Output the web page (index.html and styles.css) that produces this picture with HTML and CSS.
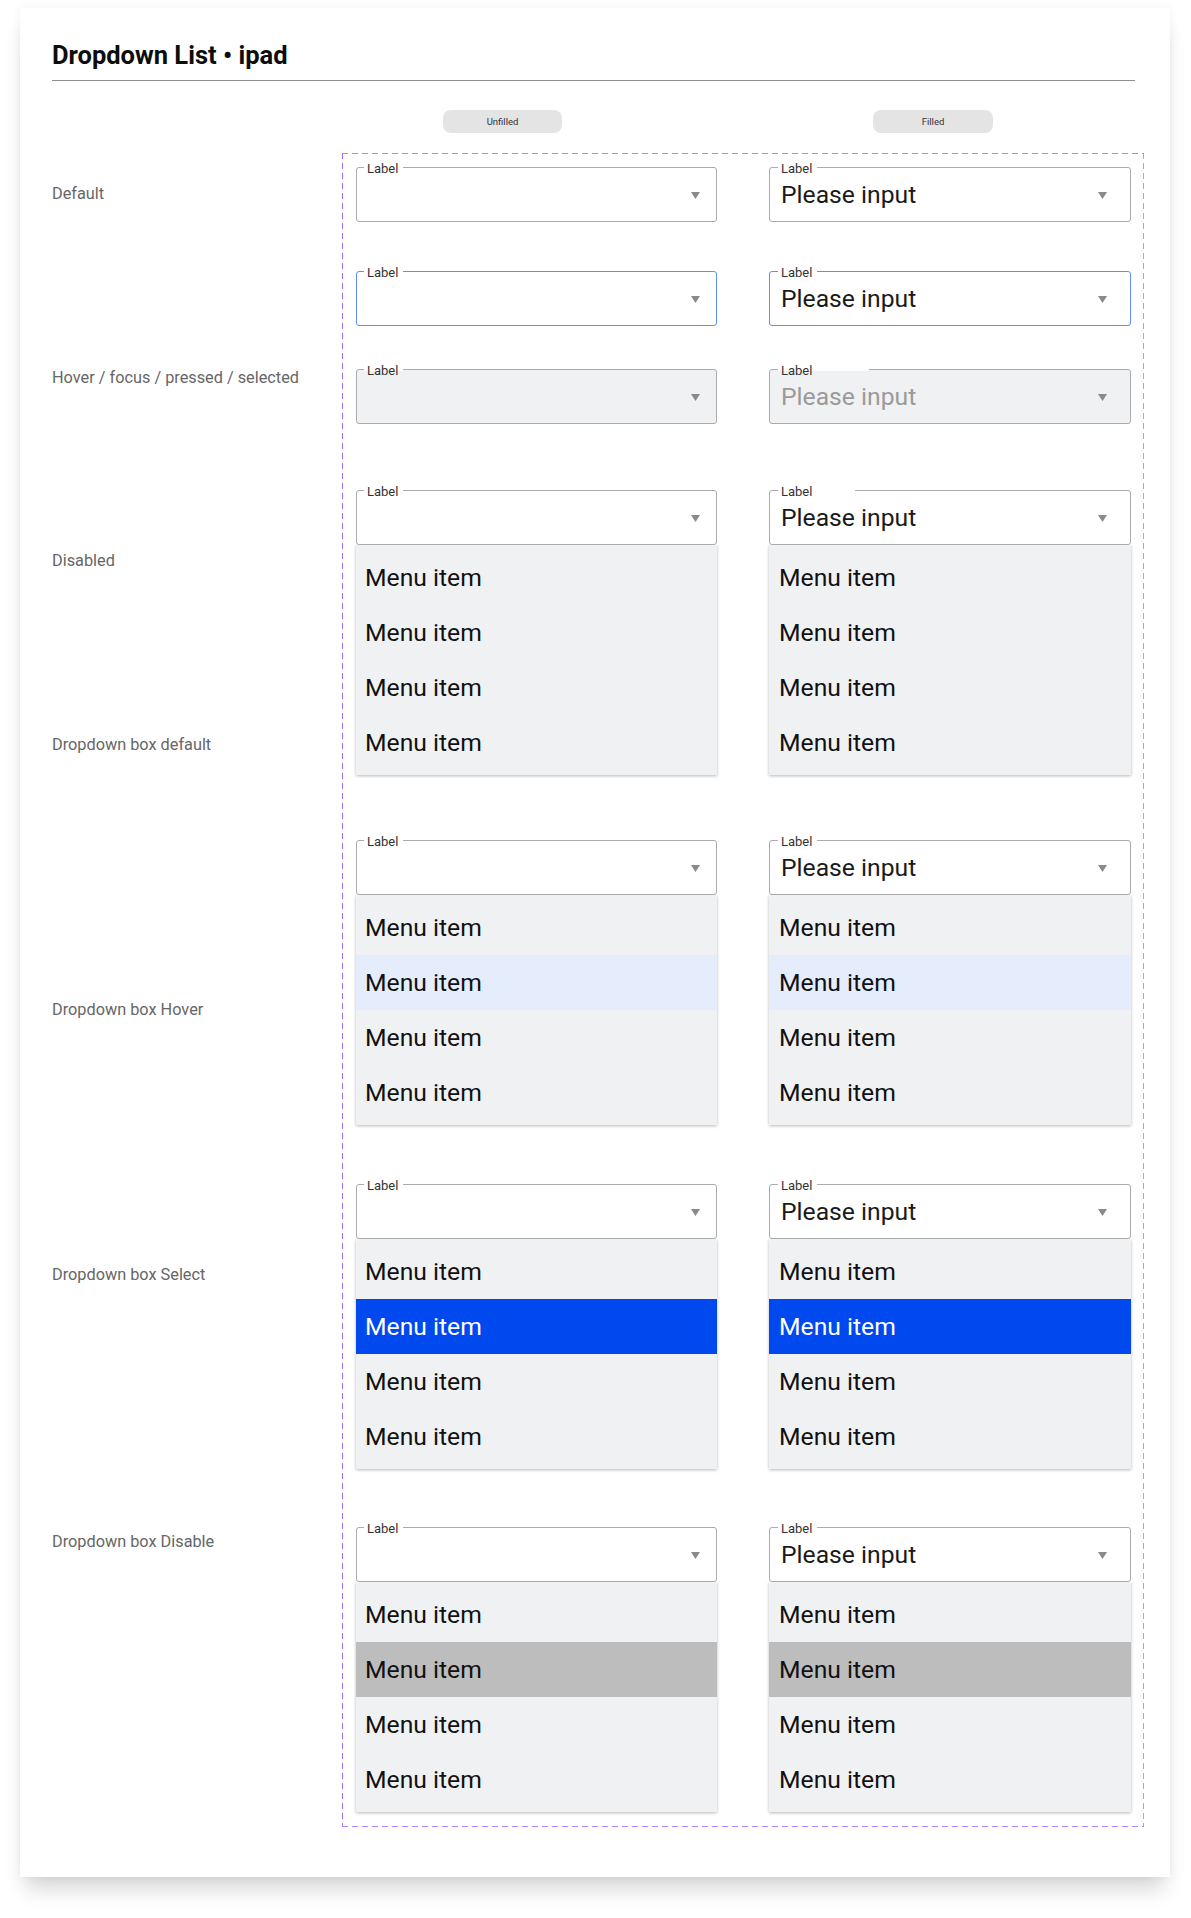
FILE: index.html
```html
<!DOCTYPE html>
<html lang="en">
<head>
<meta charset="utf-8">
<title>Dropdown List • ipad</title>
<link rel="stylesheet" href="styles.css">
</head>
<body>
<div class="card">
  <header class="head"><h1 class="title">Dropdown List • ipad</h1></header>
  <div class="main">
    <div class="labels">
      <div class="rl h184">Default</div>
      <div class="rl h183">Hover / focus / pressed / selected</div>
      <div class="rl h184">Disabled</div>
      <div class="rl h265">Dropdown box default</div>
      <div class="rl h265">Dropdown box Hover</div>
      <div class="rl h267">Dropdown box Select</div>
      <div class="rl">Dropdown box Disable</div>
    </div>
    <div class="matrix">
      <div class="pills">
        <div class="pill pill-a">Unfilled</div>
        <div class="pill pill-b">Filled</div>
      </div>
      <div class="box">
        <!-- row 1 default -->
        <div class="row">
          <div class="col col-l">
            <div class="field"><span class="flabel">Label</span><span class="value"></span><svg class="caret" viewBox="0 0 9 7"><polygon points="0,0 9,0 4.5,7"/></svg></div>
          </div>
          <div class="col col-r">
            <div class="field"><span class="flabel">Label</span><span class="value">Please input</span><svg class="caret" viewBox="0 0 9 7"><polygon points="0,0 9,0 4.5,7"/></svg></div>
          </div>
        </div>
        <!-- row 2 focus -->
        <div class="row mt49">
          <div class="col col-l">
            <div class="field focus"><span class="flabel">Label</span><span class="value"></span><svg class="caret" viewBox="0 0 9 7"><polygon points="0,0 9,0 4.5,7"/></svg></div>
          </div>
          <div class="col col-r">
            <div class="field focus"><span class="flabel">Label</span><span class="value">Please input</span><svg class="caret" viewBox="0 0 9 7"><polygon points="0,0 9,0 4.5,7"/></svg></div>
          </div>
        </div>
        <!-- row 3 disabled -->
        <div class="row mt43">
          <div class="col col-l">
            <div class="field disabled"><span class="flabel">Label</span><span class="value"></span><svg class="caret" viewBox="0 0 9 7"><polygon points="0,0 9,0 4.5,7"/></svg></div>
          </div>
          <div class="col col-r">
            <div class="field disabled"><span class="flabel notch-xl">Label</span><span class="value">Please input</span><svg class="caret" viewBox="0 0 9 7"><polygon points="0,0 9,0 4.5,7"/></svg></div>
          </div>
        </div>
        <!-- row 4 dropdown default -->
        <div class="row mt66">
          <div class="col col-l">
            <div class="field"><span class="flabel">Label</span><span class="value"></span><svg class="caret" viewBox="0 0 9 7"><polygon points="0,0 9,0 4.5,7"/></svg></div>
            <ul class="menu"><li class="item">Menu item</li><li class="item">Menu item</li><li class="item">Menu item</li><li class="item">Menu item</li></ul>
          </div>
          <div class="col col-r">
            <div class="field"><span class="flabel notch-l">Label</span><span class="value">Please input</span><svg class="caret" viewBox="0 0 9 7"><polygon points="0,0 9,0 4.5,7"/></svg></div>
            <ul class="menu"><li class="item">Menu item</li><li class="item">Menu item</li><li class="item">Menu item</li><li class="item">Menu item</li></ul>
          </div>
        </div>
        <!-- row 5 hover -->
        <div class="row mt65">
          <div class="col col-l">
            <div class="field"><span class="flabel">Label</span><span class="value"></span><svg class="caret" viewBox="0 0 9 7"><polygon points="0,0 9,0 4.5,7"/></svg></div>
            <ul class="menu"><li class="item">Menu item</li><li class="item hover">Menu item</li><li class="item">Menu item</li><li class="item">Menu item</li></ul>
          </div>
          <div class="col col-r">
            <div class="field"><span class="flabel">Label</span><span class="value">Please input</span><svg class="caret" viewBox="0 0 9 7"><polygon points="0,0 9,0 4.5,7"/></svg></div>
            <ul class="menu"><li class="item">Menu item</li><li class="item hover">Menu item</li><li class="item">Menu item</li><li class="item">Menu item</li></ul>
          </div>
        </div>
        <!-- row 6 select -->
        <div class="row mt59">
          <div class="col col-l">
            <div class="field"><span class="flabel">Label</span><span class="value"></span><svg class="caret" viewBox="0 0 9 7"><polygon points="0,0 9,0 4.5,7"/></svg></div>
            <ul class="menu"><li class="item">Menu item</li><li class="item selected">Menu item</li><li class="item">Menu item</li><li class="item">Menu item</li></ul>
          </div>
          <div class="col col-r">
            <div class="field"><span class="flabel">Label</span><span class="value">Please input</span><svg class="caret" viewBox="0 0 9 7"><polygon points="0,0 9,0 4.5,7"/></svg></div>
            <ul class="menu"><li class="item">Menu item</li><li class="item selected">Menu item</li><li class="item">Menu item</li><li class="item">Menu item</li></ul>
          </div>
        </div>
        <!-- row 7 disable -->
        <div class="row mt58">
          <div class="col col-l">
            <div class="field"><span class="flabel">Label</span><span class="value"></span><svg class="caret" viewBox="0 0 9 7"><polygon points="0,0 9,0 4.5,7"/></svg></div>
            <ul class="menu"><li class="item">Menu item</li><li class="item off">Menu item</li><li class="item">Menu item</li><li class="item">Menu item</li></ul>
          </div>
          <div class="col col-r">
            <div class="field"><span class="flabel">Label</span><span class="value">Please input</span><svg class="caret" viewBox="0 0 9 7"><polygon points="0,0 9,0 4.5,7"/></svg></div>
            <ul class="menu"><li class="item">Menu item</li><li class="item off">Menu item</li><li class="item">Menu item</li><li class="item">Menu item</li></ul>
          </div>
        </div>
      </div>
    </div>
  </div>
</div>
</body>
</html>
```

FILE: styles.css
```css
* { box-sizing: border-box; }
html, body { margin: 0; padding: 0; }
body {
  background: #ffffff;
  font-family: Roboto, "Liberation Sans", Arial, sans-serif;
  color: #111;
  width: 1191px;
  height: 1918px;
  overflow: hidden;
}
.card {
  margin: 8px 21px 0 20px;
  width: 1150px;
  height: 1869px;
  background: #fff;
  padding: 34px 35px 0 32px;
  box-shadow: 0 18px 20px -6px rgba(0,0,0,0.16), 0 0 10px rgba(0,0,0,0.05);
}
.head {
  border-bottom: 1px solid #8e8e8e;
  padding-bottom: 11px;
}
.title {
  margin: 0;
  font-size: 25.5px;
  line-height: 27px;
  font-weight: 700;
  color: #0d0d0d;
}
.main {
  display: flex;
  margin-top: 29px;
}
.labels {
  width: 290px;
  flex: none;
  padding-top: 74px;
}
.rl {
  font-size: 16.3px;
  line-height: 20px;
  color: #666;
}
.h183 { height: 183px; }
.h184 { height: 184px; }
.h265 { height: 265px; }
.h267 { height: 267px; }

.matrix { width: 802px; flex: none; }
.pills {
  display: flex;
  height: 23px;
  margin-bottom: 20px;
}
.pill {
  height: 23px;
  border-radius: 8px;
  background: #e4e4e4;
  color: #333;
  font-size: 9.5px;
  line-height: 23px;
  text-align: center;
}
.pill-a { width: 119px; margin-left: 101px; }
.pill-b { width: 120px; margin-left: 311px; }

.box {
  padding: 14px 13px 15px 14px;
  background:
    repeating-linear-gradient(90deg, #ad86ff 0 6px, transparent 6px 10px) top left / 100% 1px no-repeat,
    repeating-linear-gradient(90deg, #ad86ff 0 6px, transparent 6px 10px) bottom left / 100% 1px no-repeat,
    repeating-linear-gradient(180deg, #9d6dff 0 6px, transparent 6px 10px) top left / 1px 100% no-repeat,
    repeating-linear-gradient(180deg, #b896ff 0 6px, transparent 6px 10px) top right / 1px 100% no-repeat;
}
.row {
  display: grid;
  grid-template-columns: 361px 362px;
  column-gap: 52px;
  align-items: start;
}
.mt43 { margin-top: 43px; }
.mt49 { margin-top: 49px; }
.mt58 { margin-top: 58px; }
.mt59 { margin-top: 59px; }
.mt65 { margin-top: 65px; }
.mt66 { margin-top: 66px; }

.field {
  position: relative;
  display: flex;
  align-items: center;
  height: 55px;
  border: 1px solid #ababab;
  border-radius: 3px;
  background: #fff;
  padding: 0 16px 0 11px;
}
.col-r .field { padding-right: 23px; }
.field.focus { border-color: #5f8ff2; }
.field.disabled { background: #f0f1f3; }
.flabel {
  position: absolute;
  top: -6px;
  left: 7px;
  padding: 0 5px 0 3px;
  font-size: 13px;
  line-height: 13px;
  color: #333;
  background: linear-gradient(to bottom, #fff 0 7px, transparent 7px);
}
.col-r .flabel { left: 8px; padding-right: 5px; }
.col-r .flabel.notch-l { padding-right: 43px; }
.col-r .flabel.notch-xl { padding-right: 57px; }
.value {
  flex: 1;
  font-size: 24.7px;
  line-height: 28px;
  color: #1a1a1a;
  white-space: nowrap;
}
.disabled .value { color: #9a9a9a; }
.caret {
  width: 9px;
  height: 7px;
  flex: none;
  fill: #8a8a8a;
  margin-top: 1px;
}
.menu {
  list-style: none;
  margin: 0;
  padding: 5px 0 5px;
  background: #f0f1f3;
  box-shadow: 0 1px 3px rgba(0,0,0,0.28);
}
.item {
  height: 55px;
  display: flex;
  align-items: center;
  padding-left: 9px;
  font-size: 24.7px;
  color: #111;
}
.col-r .item { padding-left: 10px; }
.item.hover { background: #e5ecfc; }
.item.selected { background: #0049ef; color: #fff; }
.item.off { background: #bdbdbd; }
```
